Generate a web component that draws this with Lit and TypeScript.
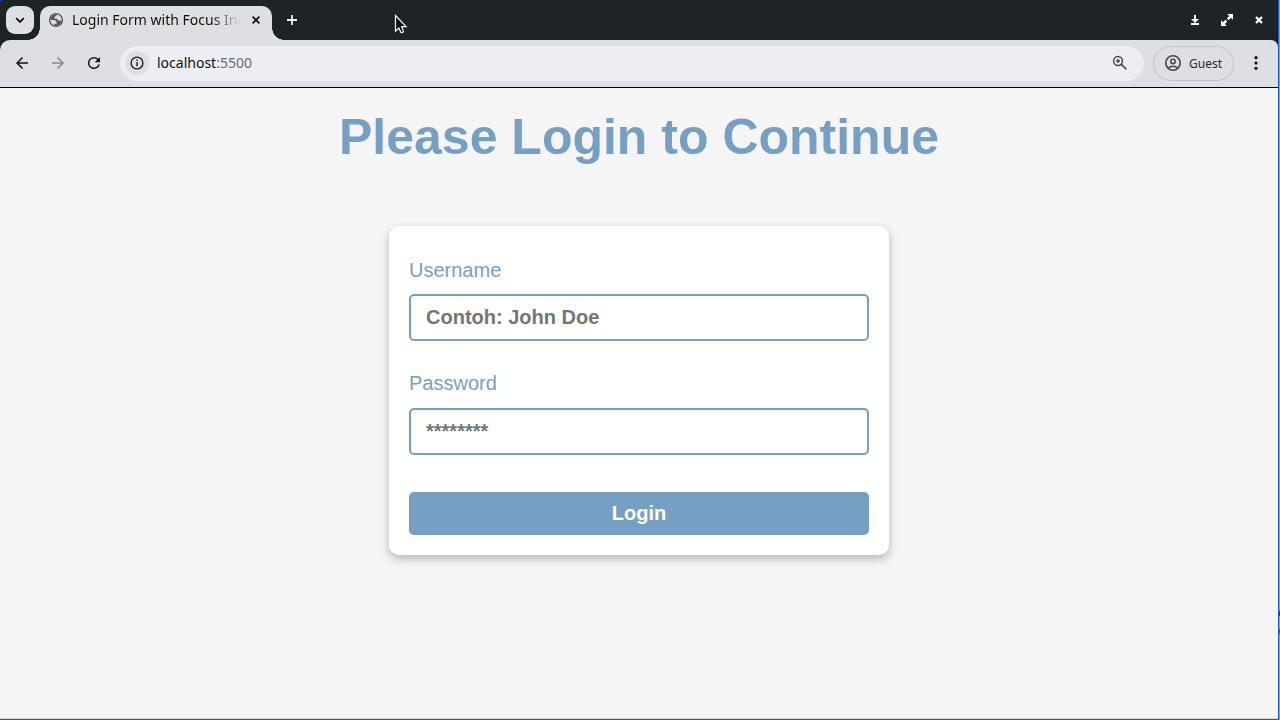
import { LitElement, html, css, svg } from "lit";
import { customElement } from "lit/decorators.js";

const icon = (size: number, body: unknown, view = 24) =>
  html`<svg width=${size} height=${size} viewBox="0 0 ${view} ${view}" fill="currentColor">${body}</svg>`;

const icons = {
  chevron: icon(10, svg`<path d="M1.2 3.2 5 7l3.8-3.8" fill="none" stroke="currentColor" stroke-width="1.8"/>`, 10),
  globe: icon(16, svg`<g transform="translate(8 8) scale(.71) translate(-12 -12)"><circle cx="12" cy="12" r="9" fill="none" stroke="currentColor" stroke-width="2"/><path d="M4 12h4.4c3.407.022 4.922 1.73 4.543 5.127H9.488v2.47a8.004 8.004 0 0 0 10.498-8.083C19.327 12.504 18.332 13 17 13c-2.137 0-3.206-.916-3.206-2.75h-3.748c-.274-2.728.683-4.092 2.87-4.092 0-.975.327-1.597.811-1.97A8.004 8.004 0 0 0 4 12z"/></g>`, 16),
  close: icon(8, svg`<path d="m.6.6 6.8 6.8m0-6.8L.6 7.4" fill="none" stroke="currentColor" stroke-width="1.7"/>`, 8),
  plus: icon(10, svg`<path d="M5 0v10M0 5h10" fill="none" stroke="currentColor" stroke-width="1.8"/>`, 10),
  minimize: icon(12, svg`<path d="M5 1h2v4h3L6 9 2 5h3zM2 9h8v2H2z"/>`, 12),
  maximize: icon(12, svg`<path d="M6.2 0H12v5.8L10 3.8 7.6 6.2 5.8 4.4 8.2 2zM0 6.2 2 8.2l2.4-2.4 1.8 1.8L3.8 10l2 2H0z"/>`, 12),
  windowClose: icon(8, svg`<path d="m1 1 6 6m0-6L1 7" fill="none" stroke="currentColor" stroke-width="2.2"/>`, 8),
  back: icon(18, svg`<path d="M20 11H7.83l5.59-5.59L12 4l-8 8 8 8 1.41-1.41L7.83 13H20v-2z"/>`),
  forward: icon(18, svg`<path d="m12 4-1.41 1.41L16.17 11H4v2h12.17l-5.58 5.59L12 20l8-8z"/>`),
  reload: icon(18, svg`<path d="M17.65 6.35A7.96 7.96 0 0 0 12 4a8 8 0 1 0 7.73 10h-2.08A6 6 0 1 1 12 6c1.66 0 3.14.69 4.22 1.78L13 11h7V4z"/>`),
  info: icon(14, svg`<circle cx="7" cy="7" r="5.9" fill="none" stroke="currentColor" stroke-width="1.4"/><path d="M6.3 6h1.4v4.2H6.3zM6.3 3.6h1.4V5H6.3z"/>`, 14),
  zoom: icon(16, svg`<g fill="none" stroke="currentColor"><circle cx="6" cy="6" r="4.4" stroke-width="1.5"/><path d="m9.1 9.1 5.3 5.3M6 4v4M4 6h4" stroke-width="1.5"/></g>`, 16),
  person: icon(16, svg`<g fill="none" stroke="currentColor" stroke-width="1.6"><circle cx="8" cy="8" r="7.2"/><circle cx="8" cy="6.4" r="2.2"/><path d="M3.2 13.1C5.8 10.7 10.2 10.7 12.8 13.1"/></g>`, 16),
  menu: icon(16, svg`<circle cx="8" cy="2.7" r="1.6"/><circle cx="8" cy="8" r="1.6"/><circle cx="8" cy="13.3" r="1.6"/>`, 16),
};

@customElement("browser-chrome")
class BrowserChrome extends LitElement {
  static styles = css`
    :host { display: block; background: linear-gradient(#1d2427, #1d2223); font-family: "Noto Sans", sans-serif; color: #111; }
    svg { display: block; flex: none; }
    .strip { display: flex; height: 40px; box-sizing: border-box; padding: 6px 13px 0 6px; }
    .search { width: 28px; height: 28px; border-radius: 9px; background: #dedfe3; display: grid; place-items: center; margin-right: 6px; }
    .tab { position: relative; width: 232px; box-sizing: border-box; padding: 0 12px 6px 8px; border-radius: 10px 10px 0 0; background: #dedfe3; display: flex; align-items: center; }
    .tab::before, .tab::after { content: ""; position: absolute; bottom: 0; width: 12px; height: 12px; }
    .tab::before { left: -12px; background: radial-gradient(circle at 0 0, transparent 11.5px, #dedfe3 12px); }
    .tab::after { right: -12px; background: radial-gradient(circle at 100% 0, transparent 11.5px, #dedfe3 12px); }
    .globe { color: #55585b; }
    .caption { width: 168px; height: 18px; line-height: 18px; margin-left: 8px; font-size: 14px; white-space: nowrap; overflow: hidden; -webkit-mask-image: linear-gradient(90deg, #000 140px, transparent 168px); mask-image: linear-gradient(90deg, #000 140px, transparent 168px); }
    .close { margin-left: auto; }
    .add { color: #f0f0f0; padding: 9px 0 0 15px; }
    .controls { margin-left: auto; display: flex; align-items: center; gap: 20px; height: 28px; color: #fff; }
    .controls span { width: 12px; display: grid; place-items: center; }
    .bar { display: flex; align-items: center; height: 48px; box-sizing: border-box; padding: 0 14px 1px 13px; background: #dedfe3; border-bottom: 1px solid #000; border-radius: 10px 7px 0 0; }
    .nav { display: flex; gap: 18px; }
    .forward { color: #87888b; }
    .address { width: 1024px; height: 35px; box-sizing: border-box; margin-left: 17px; padding: 0 16px 0 5px; border-radius: 18px; background: #edeef4; display: flex; align-items: center; }
    .site { width: 24px; height: 24px; border-radius: 50%; background: #dedfe3; display: grid; place-items: center; margin-right: 8px; color: #222; }
    .url { font-size: 14px; line-height: 20px; }
    .port { color: #6a6d72; }
    .zoom { margin-left: auto; color: #484848; }
    .guest { margin-left: 9px; width: 81px; height: 35px; box-sizing: border-box; border: 1px solid #c3c4c8; border-radius: 18px; display: flex; align-items: center; padding-left: 11px; gap: 8px; font-size: 12px; color: #292a2c; }
    .person { color: #48494c; }
    .menu { margin-left: auto; }
  `;
  render() {
    return html`
      <div class="strip">
        <div class="search">${icons.chevron}</div>
        <div class="tab">
          <span class="globe">${icons.globe}</span>
          <span class="caption">Login Form with Focus Indicator</span>
          <span class="close">${icons.close}</span>
        </div>
        <span class="add">${icons.plus}</span>
        <div class="controls"><span>${icons.minimize}</span><span>${icons.maximize}</span><span>${icons.windowClose}</span></div>
      </div>
      <div class="bar">
        <div class="nav"><span>${icons.back}</span><span class="forward">${icons.forward}</span><span>${icons.reload}</span></div>
        <div class="address">
          <span class="site">${icons.info}</span>
          <span class="url">localhost<span class="port">:5500</span></span>
          <span class="zoom">${icons.zoom}</span>
        </div>
        <div class="guest"><span class="person">${icons.person}</span>Guest</div>
        <span class="menu">${icons.menu}</span>
      </div>
    `;
  }
}

@customElement("login-page")
class LoginPage extends LitElement {
  static styles = css`
    :host { display: flex; flex-direction: column; align-items: center; background: #f5f5f5; font-family: "Liberation Sans", Arial, sans-serif; color: #75a0c4; }
    h1 { margin: 21px 0 60px; font-size: 50px; line-height: 57px; font-weight: 700; }
    form { width: 500px; box-sizing: border-box; padding: 33px 20px 20px; border-radius: 10px; background: #fff; box-shadow: 0 4px 10px rgba(0, 0, 0, 0.25); display: flex; flex-direction: column; }
    label { font-size: 20px; line-height: 23px; margin-bottom: 12px; }
    .second { margin-bottom: 13px; }
    input { box-sizing: border-box; width: 100%; height: 47px; margin: 0 0 31px; padding: 10px 15px; border: 2px solid #75a0c4; border-radius: 5px; background: #fff; font: 700 20px "Liberation Sans", Arial, sans-serif; outline: none; }
    input::placeholder { color: #757575; }
    .password { margin-bottom: 37px; }
    button { height: 43px; padding: 0; border: 0; border-radius: 5px; background: #75a0c4; color: #fff; font: 700 20px "Liberation Sans", Arial, sans-serif; }
  `;
  render() {
    return html`
      <h1>Please Login to Continue</h1>
      <form>
        <label for="username">Username</label>
        <input id="username" type="text" placeholder="Contoh: John Doe" />
        <label class="second" for="password">Password</label>
        <input id="password" class="password" type="password" placeholder="********" />
        <button type="button">Login</button>
      </form>
    `;
  }
}

@customElement("app-root")
class AppRoot extends LitElement {
  static styles = css`
    :host { display: block; position: relative; width: 1280px; height: 720px; overflow: hidden; }
    .desktop { height: 720px; box-sizing: border-box; background: #8aabdf; padding-right: 1px; }
    .window { height: 720px; box-sizing: border-box; display: flex; flex-direction: column; border-right: 1px solid #0c5cf0; border-bottom: 1px solid #2058b8; }
    login-page { flex: 1; border-bottom: 1px solid #d5d6d8; }
    .corner { position: absolute; left: 0; top: 0; width: 1px; height: 1px; background: #0c5cf0; }
    .cursor { position: absolute; left: 394px; top: 14px; }
    .edge { position: absolute; right: 0; width: 1px; background: #17356f; }
    .upper { top: 611px; height: 5px; }
    .lower { top: 629px; height: 5px; background: repeating-linear-gradient(#17356f 0 1px, #6988bd 1px 2px); }
  `;
  render() {
    return html`
      <div class="desktop">
        <div class="window"><browser-chrome></browser-chrome><login-page></login-page></div>
      </div>
      <span class="corner"></span>
      <span class="edge upper"></span>
      <span class="edge lower"></span>
      <svg class="cursor" width="14" height="21" viewBox="0 0 14 21">
        <path d="M1.5 1.5V17.2l3.4-3.1 1.8 3.9c.6 1.3 3 .3 2.5-1.1L7.7 12.7h4.4z" fill="#0a0a0a" stroke="#fff" stroke-width="1.2" />
      </svg>
    `;
  }
}
